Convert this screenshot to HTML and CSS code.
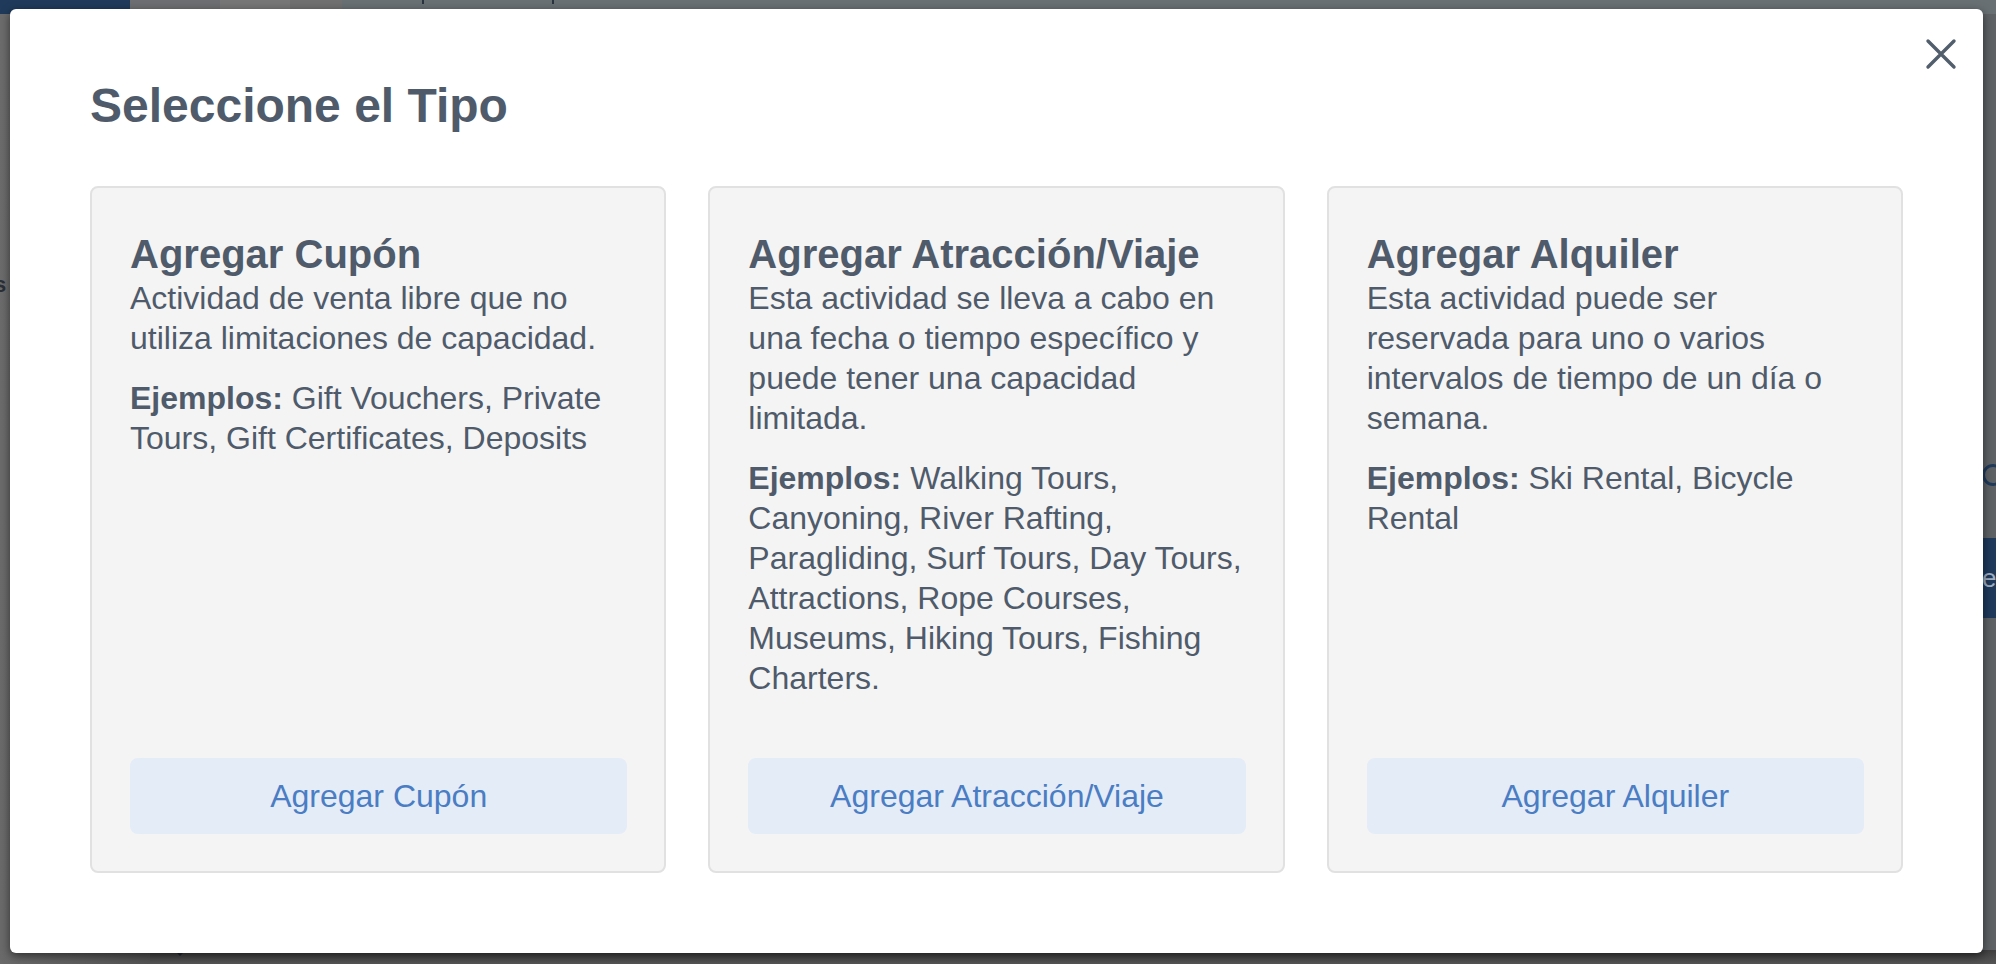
FILE: index.html
```html
<!DOCTYPE html>
<html lang="es">
<head>
<meta charset="utf-8">
<title>Seleccione el Tipo</title>
<link rel="stylesheet" href="styles.css">
</head>
<body>
<div class="page">
  <div class="page-top">
    <div class="logo"></div>
    <div class="nav nav-a"></div>
    <div class="nav nav-b"></div>
    <div class="nav nav-c"></div>
    <div class="nav nav-d"><span class="tick"></span><span class="tick"></span></div>
  </div>
  <div class="page-main">
    <div class="side-left"><span class="side-text">s</span></div>
    <div class="side-fill"></div>
    <div class="side-right">
      <span class="side-icon"></span>
      <span class="side-btn">e</span>
    </div>
  </div>
  <div class="page-bottom">
    <div class="bottom-a"><span class="caret"></span></div>
    <div class="bottom-b"></div>
  </div>
</div>

<div class="modal">
  <button class="close" aria-label="Cerrar">
    <svg viewBox="0 0 32 32" width="32" height="32"><path d="M3 3 L29 29 M29 3 L3 29" fill="none" stroke="currentColor" stroke-width="3.4" stroke-linecap="round"/></svg>
  </button>
  <h1 class="title">Seleccione el Tipo</h1>
  <div class="cards">
    <div class="card">
      <h2 class="card-title">Agregar Cupón</h2>
      <div class="card-body">
        <p class="desc">Actividad de venta libre que no utiliza limitaciones de capacidad.</p>
        <p class="examples"><strong>Ejemplos:</strong> Gift Vouchers, Private Tours, Gift Certificates, Deposits</p>
      </div>
      <button class="card-btn">Agregar Cupón</button>
    </div>
    <div class="card">
      <h2 class="card-title">Agregar Atracción/Viaje</h2>
      <div class="card-body">
        <p class="desc">Esta actividad se lleva a cabo en una fecha o tiempo específico y puede tener una capacidad limitada.</p>
        <p class="examples"><strong>Ejemplos:</strong> Walking Tours, Canyoning, River Rafting, Paragliding, Surf Tours, Day Tours, Attractions, Rope Courses, Museums, Hiking Tours, Fishing Charters.</p>
      </div>
      <button class="card-btn">Agregar Atracción/Viaje</button>
    </div>
    <div class="card">
      <h2 class="card-title">Agregar Alquiler</h2>
      <div class="card-body">
        <p class="desc">Esta actividad puede ser<br>reservada para uno o varios intervalos de tiempo de un día o semana.</p>
        <p class="examples"><strong>Ejemplos:</strong> Ski Rental, Bicycle Rental</p>
      </div>
      <button class="card-btn">Agregar Alquiler</button>
    </div>
  </div>
</div>
</body>
</html>
```

FILE: styles.css
```css
* { box-sizing: border-box; }

html, body {
  margin: 0;
  padding: 0;
  width: 1996px;
  height: 964px;
  overflow: hidden;
}

body {
  font-family: "Liberation Sans", Arial, Helvetica, sans-serif;
  color: #4f5b6a;
  background: #606467;
  position: relative;
}

/* ---------- dimmed page underneath ---------- */
.page {
  height: 964px;
  display: grid;
  grid-template-rows: 14px 1fr 14px;
}

.page-top {
  display: flex;
}
.logo { width: 130px; background: #1f3a5b; }
.nav-a { width: 90px; background: #6c6e71; }
.nav-b { width: 70px; background: #767676; }
.nav-c { width: 52px; background: #707070; }
.nav-d {
  flex: 1;
  background: #687074;
  display: flex;
  gap: 128px;
  padding-left: 80px;
}
.tick { width: 2px; height: 4px; background: #2a3340; }

.page-main {
  display: flex;
}
.side-left {
  width: 12px;
  background: linear-gradient(#6c6c6d, #6a6a6a);
  padding-top: 258px;
  overflow: hidden;
}
.side-text {
  display: block;
  margin-left: -6px;
  font-weight: bold;
  font-size: 22px;
  color: #2a2f38;
}
.side-fill { flex: 1; }
.side-right {
  width: 14px;
  background: #5e6265;
  display: flex;
  flex-direction: column;
  padding-top: 450px;
  overflow: hidden;
}
.side-icon {
  display: block;
  width: 22px;
  height: 22px;
  border: 3px solid #1f3a5b;
  border-radius: 50%;
  margin-left: 0;
}
.side-btn {
  display: block;
  margin-top: 52px;
  height: 80px;
  background: #1f3a5b;
  color: #9fb0c4;
  font-size: 26px;
  line-height: 80px;
  padding-left: 0;
}

.page-bottom {
  display: flex;
  background: #4d4d4d;
}
.bottom-a {
  width: 150px;
  background: linear-gradient(90deg, #6a6a6a, #545454);
  position: relative;
}
.bottom-b { flex: 1; background: linear-gradient(#3f3f3f, #555); }
.caret {
  position: absolute;
  left: 174px;
  top: 0;
  width: 0;
  height: 0;
  border-left: 6px solid transparent;
  border-right: 6px solid transparent;
  border-top: 6px solid #20242b;
}

/* ---------- modal ---------- */
.modal {
  position: absolute;
  top: 9px;
  left: 10px;
  width: 1973px;
  height: 944px;
  background: #fff;
  border-radius: 6px;
  box-shadow: 0 3px 10px rgba(0, 0, 0, 0.55);
  padding: 70px 80px 80px;
}

.close {
  position: absolute;
  top: 29px;
  right: 26px;
  width: 32px;
  height: 32px;
  padding: 0;
  border: 0;
  background: transparent;
  color: #525e6c;
  cursor: pointer;
}
.close svg { display: block; }

.title {
  margin: 0 0 54px;
  font-size: 48px;
  line-height: 53px;
  font-weight: bold;
  color: #4f5b6a;
}

.cards {
  display: grid;
  grid-template-columns: repeat(3, 1fr);
  gap: 42px;
  height: 687px;
}

.card {
  display: flex;
  flex-direction: column;
  background: #f4f4f4;
  border: 2px solid #e1e1e1;
  border-radius: 8px;
  padding: 42px 34px 37px 38px;
}

.card-title {
  margin: 0;
  font-size: 40px;
  line-height: 48px;
  font-weight: bold;
  color: #4f5b6a;
}

.card-body {
  flex: 1;
  margin-bottom: 60px;
  font-size: 32px;
  line-height: 40px;
  color: #4f5b6a;
}

.card-body p { margin: 0; }
.card-body .desc { margin-bottom: 20px; }
.card-body strong { font-weight: bold; }

.card-btn {
  display: block;
  height: 76px;
  margin-right: 3px;
  border: 0;
  border-radius: 8px;
  background: #e4ecf7;
  color: #4a7dc3;
  font-family: inherit;
  font-size: 32px;
  cursor: pointer;
}
```
